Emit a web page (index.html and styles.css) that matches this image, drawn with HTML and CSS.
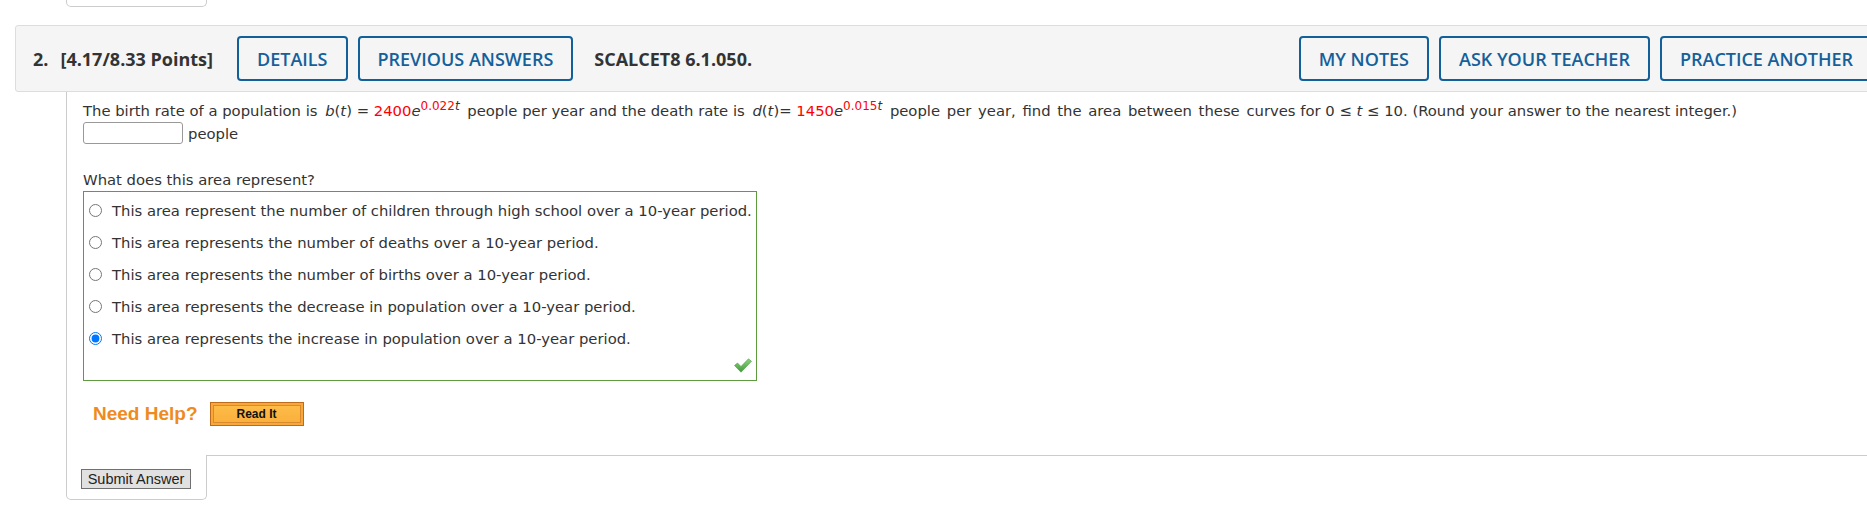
FILE: index.html
```html
<!DOCTYPE html>
<html lang="en">
<head>
<meta charset="utf-8">
<title>Question 2</title>
<link rel="stylesheet" href="styles.css">
</head>
<body>
<div class="page">
  <div class="prev-tab"></div>
  <div class="question">
    <div class="qheader">
      <div class="qnum"><span class="num">2.</span>[4.17/8.33 Points]</div>
      <button class="hbtn first">DETAILS</button>
      <button class="hbtn">PREVIOUS ANSWERS</button>
      <div class="qcode">SCALCET8 6.1.050.</div>
      <div class="hright">
        <button class="hbtn">MY NOTES</button>
        <button class="hbtn">ASK YOUR TEACHER</button>
        <button class="hbtn">PRACTICE ANOTHER</button>
      </div>
    </div>
    <div class="qbody">
      <p class="stem">The birth rate of a population is <span class="math"><i>b</i>(<i>t</i>) = <span class="red">2400</span><i>e</i><sup><span class="red">0.022</span><i>t</i></sup></span> people per year and the death rate is <span class="math"><i>d</i>(<i>t</i>)= <span class="red">1450</span><i>e</i><sup><span class="red">0.015</span><i>t</i></sup></span> <span class="wide">people per year, find the area between these curves</span> for 0 ≤ <i>t</i> ≤ 10. (Round your answer to the nearest integer.)</p>
      <div class="answer-row"><input class="ans" type="text"><span>people</span></div>
      <p class="sub">What does this area represent?</p>
      <div class="choices">
        <label class="choice"><input type="radio" name="q2"><span>This area represent the number of children through high school over a 10-year period.</span></label>
        <label class="choice"><input type="radio" name="q2"><span>This area represents the number of deaths over a 10-year period.</span></label>
        <label class="choice"><input type="radio" name="q2"><span>This area represents the number of births over a 10-year period.</span></label>
        <label class="choice"><input type="radio" name="q2"><span>This area represents the decrease in population over a 10-year period.</span></label>
        <label class="choice"><input type="radio" name="q2" checked><span>This area represents the increase in population over a 10-year period.</span></label>
        <div class="check-row">
          <svg class="check" width="18" height="15" viewBox="0 0 18 15">
            <defs>
              <linearGradient id="cg" x1="0" y1="0" x2="0" y2="1">
                <stop offset="0" stop-color="#8fd47f"/>
                <stop offset="1" stop-color="#3f9a3a"/>
              </linearGradient>
            </defs>
            <path d="M0.5 7.5 L3.5 5 L7 8.5 L14.5 0.8 L17.5 3.3 L7 14.2 Z" fill="url(#cg)" stroke="#4a9b42" stroke-width="0.6" stroke-linejoin="round"/>
          </svg>
        </div>
      </div>
      <div class="help">
        <span class="need">Need Help?</span>
        <button class="readit"><span>Read It</span></button>
      </div>
    </div>
    <div class="submit-row">
      <div class="submit-tab"><button class="submit">Submit Answer</button></div>
      <div class="submit-line"></div>
    </div>
  </div>
</div>
</body>
</html>
```

FILE: styles.css
```css
html, body {
  margin: 0;
  padding: 0;
  overflow: hidden;
  background: #fff;
}
body {
  font-family: "DejaVu Sans", Verdana, sans-serif;
  color: #333;
}
.page {
  padding-left: 15px;
  width: 1884px;
  box-sizing: border-box;
}
.prev-tab {
  margin-left: 51px;
  width: 141px;
  height: 7px;
  box-sizing: border-box;
  border: 1px solid #ccc;
  border-top: none;
  border-radius: 0 0 5px 5px;
}
.qheader {
  margin-top: 18px;
  width: 1869px;
  height: 67px;
  box-sizing: border-box;
  border: 1px solid #ddd;
  border-radius: 3px;
  background: #f5f5f5;
  display: flex;
  align-items: center;
  padding: 0 10px 0 17px;
  font-family: "Open Sans", "Noto Sans", sans-serif;
  color: #333;
}
.qnum {
  font-weight: 700;
  font-size: 18px;
  white-space: nowrap;
}
.qnum .num {
  margin-right: 12px;
}
.hbtn {
  height: 45px;
  box-sizing: border-box;
  padding: 0 18px;
  border: 2px solid #11609a;
  border-radius: 4px;
  background: transparent;
  color: #14609a;
  font-family: "Open Sans", "Noto Sans", sans-serif;
  font-weight: 600;
  font-size: 18px;
  margin-left: 10px;
  white-space: nowrap;
}
.hbtn.first {
  margin-left: 24px;
}
.qcode {
  margin-left: 21px;
  font-weight: 700;
  font-size: 18px;
  white-space: nowrap;
}
.hright {
  margin-left: auto;
  display: flex;
}
.qbody {
  margin-left: 51px;
  border-left: 1px solid #ccc;
  padding: 10px 0 29px 16px;
  font-size: 14.8px;
}
.stem {
  margin: 0;
  line-height: 17px;
  white-space: nowrap;
}
.wide {
  word-spacing: 2px;
}
.math {
  margin-left: 3px;
  margin-right: 3px;
}
.red {
  color: #ff0000;
}
sup {
  font-size: 12px;
  line-height: 0;
  vertical-align: 6px;
}
.answer-row {
  display: flex;
  align-items: center;
  margin-top: 3px;
  height: 22px;
}
.ans {
  width: 100px;
  height: 22px;
  box-sizing: border-box;
  border: 1px solid #999;
  border-radius: 3px;
  margin: 0 5px 0 0;
  padding: 0;
  background: #fff;
}
.sub {
  margin: 27px 0 0;
  line-height: 17px;
}
.choices {
  margin-top: 3px;
  width: 674px;
  box-sizing: border-box;
  border: 1px solid #5f9b40;
  padding-top: 2px;
}
.choice {
  height: 32px;
  display: flex;
  align-items: center;
}
.choice input {
  margin: 0 10px 0 5px;
  width: 13px;
  height: 13px;
}
.check-row {
  height: 26px;
  box-sizing: border-box;
  display: flex;
  justify-content: flex-end;
  align-items: flex-end;
  padding: 0 4px 7px 0;
}
.help {
  display: flex;
  align-items: center;
  margin: 21px 0 0 10px;
  height: 24px;
}
.need {
  font-family: "Liberation Sans", Arial, sans-serif;
  font-weight: 700;
  font-size: 19px;
  color: #ef8a21;
  margin-right: 12px;
}
.readit {
  width: 94px;
  height: 24px;
  box-sizing: border-box;
  border: 1px solid #bd6c1c;
  background: #f9a63a;
  padding: 2px;
  margin: 0;
  display: flex;
}
.readit span {
  flex: 1;
  border: 1px solid #d98a2c;
  background: linear-gradient(#fdbb48, #fbb03c);
  font-family: "Liberation Sans", Arial, sans-serif;
  font-weight: 700;
  font-size: 12px;
  color: #111;
  line-height: 16px;
  text-align: center;
}
.submit-row {
  display: flex;
  margin-left: 51px;
}
.submit-tab {
  width: 141px;
  height: 45px;
  box-sizing: border-box;
  border: 1px solid #ccc;
  border-top: none;
  border-radius: 0 0 5px 5px;
  padding: 14px 0 0 14px;
}
.submit-line {
  flex: 1;
  border-top: 1px solid #ccc;
}
.submit {
  width: 110px;
  height: 20px;
  box-sizing: border-box;
  border: 1px solid #707070;
  background: #e1e1e1;
  font-family: "Liberation Sans", Arial, sans-serif;
  font-size: 14.5px;
  color: #222;
  padding: 0;
  margin: 0;
  line-height: 18px;
}
```
